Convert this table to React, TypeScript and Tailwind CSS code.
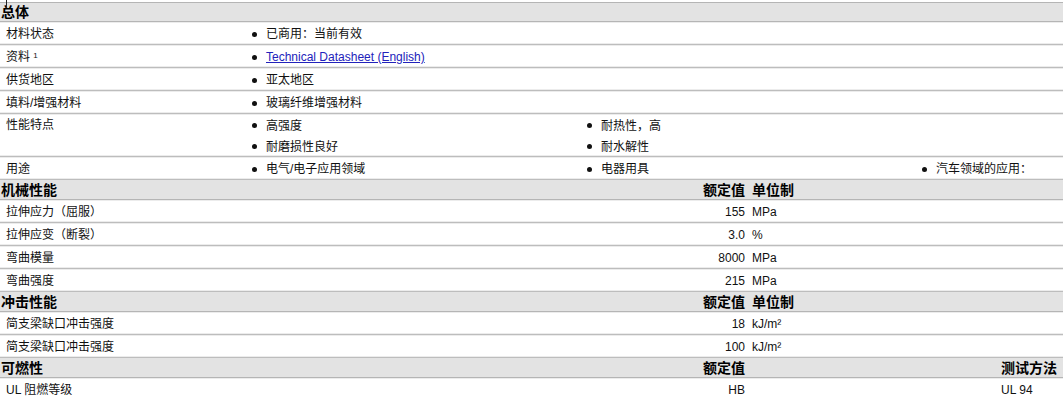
import React from 'react';

const rowLine =
  'border-b border-[#bdbdbd] shadow-[inset_0_1px_0_#ececec,inset_0_-1px_0_#ececec]';

const Bullet = ({ children }: { children: React.ReactNode }) => (
  <div className="flex items-center h-[21px]">
    <span className="ml-[5px] mr-[9px] inline-block h-[5px] w-[5px] rounded-full bg-[#111]" />
    <span>{children}</span>
  </div>
);

const GeneralRow = ({ label, cols, tall }: { label: React.ReactNode; cols: React.ReactNode[][]; tall?: boolean }) => (
  <div className={`flex ${tall ? 'h-[43px] items-start pt-[1px]' : 'h-[23px] items-center pt-[2px]'} ${rowLine}`}>
    <div className={`w-[247px] shrink-0 pl-[6px] ${tall ? 'leading-[21px]' : ''}`}>{label}</div>
    {cols.map((items, i) => (
      <div key={i} className="w-[335px] shrink-0">
        {items.map((it, j) => (
          <Bullet key={j}>{it}</Bullet>
        ))}
      </div>
    ))}
  </div>
);

const SectionHead = ({ title, value, unit, method }: { title: string; value?: string; unit?: string; method?: string }) => (
  <div className="flex h-[20px] items-center bg-[#e3e3e3] border-b border-[#b5b5b5] pt-[1px] text-[14px] font-bold text-black">
    <div className="w-[745px] shrink-0 flex">
      <div className="flex-1 pl-[1px]">{title}</div>
      <div>{value}</div>
    </div>
    <div className="w-[248px] shrink-0 pl-[7px]">{unit}</div>
    <div className="flex-1 text-right pr-[6px]">{method}</div>
  </div>
);

const PropRow = ({ label, value, unit, method }: { label: React.ReactNode; value: string; unit?: React.ReactNode; method?: string }) => (
  <div className={`flex h-[23px] items-center pt-[2px] ${rowLine}`}>
    <div className="w-[745px] shrink-0 flex">
      <div className="flex-1 pl-[6px]">{label}</div>
      <div>{value}</div>
    </div>
    <div className="w-[255px] shrink-0 pl-[7px]">{unit}</div>
    <div className="flex-1 pl-[1px]">{method}</div>
  </div>
);

export default function App() {
  return (
    <div className="relative w-[1063px] h-[399px] overflow-hidden bg-white pt-[2px] text-[12px] text-[#111] font-['Liberation_Sans','Noto_Sans_CJK_SC',sans-serif]">
      <div className="absolute left-[6px] top-0 h-[8px] w-px bg-[#222]" />

      <div className="flex h-[20px] items-center bg-[#e3e3e3] border-t border-b border-[#b5b5b5] pt-[1px] text-[14px] font-bold text-black pl-[1px]">
        总体
      </div>
      <GeneralRow label="材料状态" cols={[["已商用：当前有效"]]} />
      <GeneralRow
        label={
          <span>
            资料 <sup className="text-[8px] relative -top-[3px]">1</sup>
          </span>
        }
        cols={[[<a key="l" className="text-[#2222bb] underline" href="#">Technical Datasheet (English)</a>]]}
      />
      <GeneralRow label="供货地区" cols={[["亚太地区"]]} />
      <GeneralRow label="填料/增强材料" cols={[["玻璃纤维增强材料"]]} />
      <GeneralRow tall label="性能特点" cols={[["高强度", "耐磨损性良好"], ["耐热性，高", "耐水解性"]]} />
      <GeneralRow label="用途" cols={[["电气/电子应用领域"], ["电器用具"], ["汽车领域的应用："]]} />

      <SectionHead title="机械性能" value="额定值" unit="单位制" />
      <PropRow label="拉伸应力（屈服）" value="155" unit="MPa" />
      <PropRow label="拉伸应变（断裂）" value="3.0" unit="%" />
      <PropRow label="弯曲模量" value="8000" unit="MPa" />
      <PropRow label="弯曲强度" value="215" unit="MPa" />

      <SectionHead title="冲击性能" value="额定值" unit="单位制" />
      <PropRow label="简支梁缺口冲击强度" value="18" unit={<span>kJ/m²</span>} />
      <PropRow label="简支梁缺口冲击强度" value="100" unit={<span>kJ/m²</span>} />

      <SectionHead title="可燃性" value="额定值" method="测试方法" />
      <PropRow label="UL 阻燃等级" value="HB" method="UL 94" />
    </div>
  );
}
